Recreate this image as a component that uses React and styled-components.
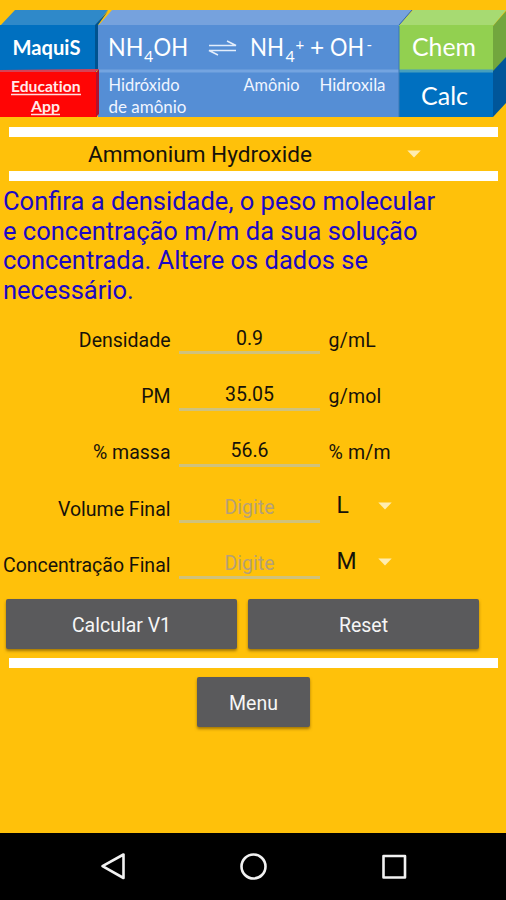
import React from "react";
import styled, { createGlobalStyle } from "styled-components";

const GlobalStyle = createGlobalStyle`
  * { box-sizing: border-box; }
  body { margin: 0; background: #ffc10a; }
`;

const Screen = styled.div`
  width: 506px;
  height: 900px;
  display: flex;
  flex-direction: column;
  background: #ffc10a;
  color: #16120a;
  font-family: Roboto, sans-serif;
  overflow: hidden;
`;

const Content = styled.main`
  flex: 1;
  min-height: 0;
  display: flex;
  flex-direction: column;
  padding-top: 10px;
`;

const BannerArt = styled.svg`
  display: block;
  flex: none;
  width: 506px;
  height: 107px;
  font-family: Lato, sans-serif;
  font-variant-ligatures: none;
`;

const Rule = styled.div`
  flex: none;
  height: 10px;
  margin: 0 8px 0 9px;
  background: #fff;
`;

const RuleGap = styled.div`
  height: 10px;
`;

const Substance = styled.div`
  height: 34px;
  display: flex;
  align-items: center;
  padding-left: 88px;
  font-size: 22.6px;
  line-height: 34px;
`;

const SubstanceName = styled.span`
  width: 319px;
  padding-top: 2px;
  line-height: 32px;
  white-space: nowrap;
`;

const Caret = styled.svg`
  display: block;
  width: 14px;
  height: 8px;
  fill: #ffedb0;
`;

const Instructions = styled.p`
  margin: 6.4px 0 0;
  padding-left: 3px;
  height: 125.1px;
  color: #1c09c4;
  font-size: 25.5px;
  line-height: 29.5px;
  white-space: pre-line;
`;

const Form = styled.div`
  display: flex;
  flex-direction: column;
`;

const FieldRow = styled.label`
  height: 56.25px;
  display: grid;
  grid-template-columns: 170.5px 141px 1fr;
  column-gap: 8.5px;
  font-size: 19.5px;
  line-height: 24px;
`;

const FieldLabel = styled.span`
  padding-top: 16.5px;
  text-align: right;
  white-space: nowrap;
`;

const FieldInput = styled.input`
  height: 42px;
  width: 141px;
  padding: 14px 0 1px;
  border: 0;
  border-bottom: 3px solid #d0c27c;
  border-radius: 0;
  background: transparent;
  outline: none;
  text-align: center;
  color: inherit;
  font: inherit;
  &::placeholder { color: #b5a078; opacity: 1; }
`;

const Unit = styled.span`
  padding: 16.5px 0 0 0;
  letter-spacing: 0.2px;
`;

const UnitSelect = styled.span`
  height: 24px;
  margin-top: 13px;
  padding-left: 8px;
  display: flex;
  align-items: center;
  font-size: 23px;
`;

const UnitName = styled.span`
  width: 41.5px;
`;

const ButtonRow = styled.div`
  display: flex;
  gap: 11px;
  padding: 5.5px 0 0 6px;
  margin-bottom: 9px;
`;

const Button = styled.button`
  width: ${(p) => p.$width}px;
  height: 50px;
  padding: 3px 0 0;
  border: 0;
  border-radius: 2px;
  background: #5a5a5c;
  color: #f6f6f6;
  box-shadow: 0 2px 3px rgba(90, 60, 0, 0.55);
  font: 19.5px/47px Roboto, sans-serif;
`;

const MenuRow = styled.div`
  display: flex;
  padding: 9px 0 0 197px;
`;

const NavBar = styled.nav`
  flex: none;
  height: 67px;
  display: flex;
  justify-content: center;
  gap: 112px;
  padding-top: 19px;
  background: #000;
`;

const NavIcon = styled.svg`
  width: 28px;
  height: 28px;
  fill: none;
  stroke: #f2f2f2;
  stroke-width: 2.6;
  stroke-linejoin: round;
`;

function Banner() {
  return (
    <BannerArt viewBox="0 10 506 107">
      <polygon points="0,26 15,10 108,10 95,26" fill="#2f89c9" />
      <rect x="0" y="25" width="96" height="47" fill="#0070c0" />
      <polygon points="95,25 108,11 98,25 98,70 95,72" fill="#00528f" />
      <polygon points="98,26 112,10 412,10 399,26" fill="#76a2dd" />
      <rect x="98" y="25" width="301" height="92" fill="#558ed5" />
      <rect x="98" y="69.500" width="301" height="3" fill="#74a4e0" />
      <rect x="0" y="72" width="97" height="45" fill="#ff0505" />
      <polygon points="0,72 95,72 99,69 0,70" fill="#d84255" />
      <polygon points="96,73 99,69 99,114 96,117" fill="#b3122c" />
      <polygon points="399,26 413,10 506,10 493,26" fill="#a7da72" />
      <rect x="399" y="25" width="94" height="46" fill="#92d050" />
      <polygon points="493,26 506,11 506,58 493,72" fill="#72a63e" />
      <rect x="399" y="71" width="94" height="46" fill="#0070c0" />
      <rect x="399" y="69.500" width="94" height="3" fill="#469fbe" />
      <polygon points="493,71 506,57 506,103 493,117" fill="#00569a" />
      <path d="M399 26V117" stroke="#3a78b4" />
      <path d="M399 25L412 10" stroke="#2f6cab" fill="none" />
      <g fill="#fff">
        <text x="12.500" y="55" fontSize="20" fontWeight="700" textLength="68" lengthAdjust="spacingAndGlyphs">MaquiS</text>
        <g fontSize="15.500" fontWeight="700" fill="#ffeaea">
          <text x="11" y="92" textLength="69.500" lengthAdjust="spacingAndGlyphs">Education</text>
          <text x="31" y="112" textLength="29" lengthAdjust="spacingAndGlyphs">App</text>
        </g>
        <path d="M11 94.500H81M31 114.500H60" stroke="#ffdede" strokeWidth="1.300" />
        <g fontSize="24.500">
          <text x="108" y="56" textLength="35.500" lengthAdjust="spacingAndGlyphs">NH</text>
          <text x="144" y="62" fontSize="16">4</text>
          <text x="153.500" y="56" textLength="34.500" lengthAdjust="spacingAndGlyphs">OH</text>
          <text x="250" y="56" textLength="34" lengthAdjust="spacingAndGlyphs">NH</text>
          <text x="285.500" y="62" fontSize="16">4</text>
          <text x="295.500" y="50" fontSize="15">+</text>
          <text x="310" y="56">+</text>
          <text x="330" y="56" textLength="34" lengthAdjust="spacingAndGlyphs">OH</text>
          <text x="366.500" y="50" fontSize="15">-</text>
          <text x="412" y="56" fontSize="25.500" textLength="64" lengthAdjust="spacingAndGlyphs">Chem</text>
          <text x="421" y="104.500" fontSize="25.500" textLength="47" lengthAdjust="spacingAndGlyphs">Calc</text>
        </g>
        <g fontSize="16.800" fill="#f0f5ff">
          <text x="108.500" y="91" textLength="71" lengthAdjust="spacingAndGlyphs">Hidróxido</text>
          <text x="108.500" y="112.500" textLength="78" lengthAdjust="spacingAndGlyphs">de amônio</text>
          <text x="243.500" y="91" textLength="56" lengthAdjust="spacingAndGlyphs">Amônio</text>
          <text x="319.500" y="91" textLength="66" lengthAdjust="spacingAndGlyphs">Hidroxila</text>
        </g>
      </g>
      <path d="M209 45.500H236L227 41M236 50.500H209L218 55" fill="none" stroke="#e3edfb" strokeWidth="1.500" />
    </BannerArt>
  );
}

function DownCaret() {
  return (
    <Caret viewBox="0 0 14 8">
      <path d="M0.300 0.500H13.700L7 7.500Z" />
    </Caret>
  );
}

const fields = [
  { label: "Densidade", value: "0.9", unit: "g/mL" },
  { label: "PM", value: "35.05", unit: "g/mol" },
  { label: "% massa", value: "56.6", unit: "% m/m" },
  { label: "Volume Final", unit: "L", select: true },
  { label: "Concentração Final", unit: "M", select: true },
];

const instructions = `Confira a densidade, o peso molecular
e concentração m/m da sua solução
concentrada. Altere os dados se
necessário.`;

export default function App() {
  return (
    <Screen>
      <GlobalStyle />
      <Content>
        <Banner />
        <RuleGap />
        <Rule />
        <Substance>
          <SubstanceName>Ammonium Hydroxide</SubstanceName>
          <DownCaret />
        </Substance>
        <Rule />
        <Instructions>{instructions}</Instructions>
        <Form>
          {fields.map((f) => (
            <FieldRow key={f.label}>
              <FieldLabel>{f.label}</FieldLabel>
              <FieldInput defaultValue={f.value} placeholder="Digite" />
              {f.select ? (
                <UnitSelect>
                  <UnitName>{f.unit}</UnitName>
                  <DownCaret />
                </UnitSelect>
              ) : (
                <Unit>{f.unit}</Unit>
              )}
            </FieldRow>
          ))}
        </Form>
        <ButtonRow>
          <Button $width={231}>Calcular V1</Button>
          <Button $width={231}>Reset</Button>
        </ButtonRow>
        <Rule />
        <MenuRow>
          <Button $width={113}>Menu</Button>
        </MenuRow>
      </Content>
      <NavBar>
        <NavIcon viewBox="0 0 28 28">
          <path d="M24.500 2.500V26L3.500 14.200Z" />
        </NavIcon>
        <NavIcon viewBox="0 0 28 28">
          <circle cx="14.500" cy="14.500" r="12" />
        </NavIcon>
        <NavIcon viewBox="0 0 28 28">
          <rect x="4.500" y="4" width="21.500" height="21.500" />
        </NavIcon>
      </NavBar>
    </Screen>
  );
}
